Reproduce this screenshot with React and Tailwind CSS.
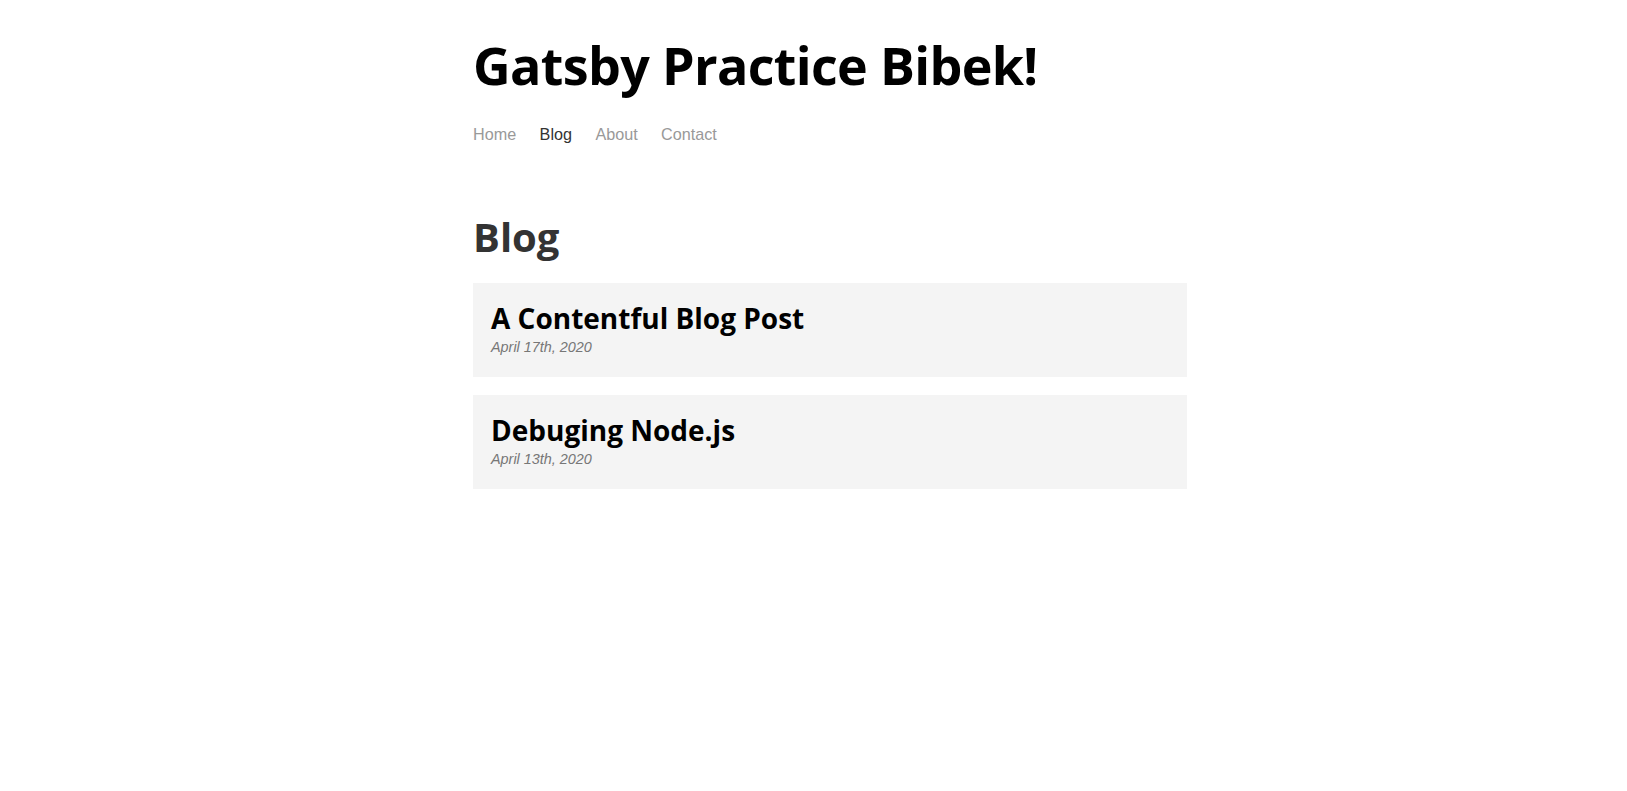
import React from "react";

const heading = { fontFamily: '"Open Sans", "Noto Sans", sans-serif' };
const body = { fontFamily: '"Liberation Sans", Arial, sans-serif' };

const posts = [
  { title: "A Contentful Blog Post", date: "April 17th, 2020" },
  { title: "Debuging Node.js", date: "April 13th, 2020" },
];

export default function App() {
  return (
    <div className="min-h-screen bg-white pl-[33px]">
      <div className="mx-auto w-[750px] px-[18px] pt-[33px]">
        <header className="pb-[67px]">
          <h1 className="text-[52px] leading-[64px] font-bold tracking-[-0.65px] text-black" style={heading}>
            Gatsby Practice Bibek!
          </h1>
          <ul className="mt-[25px] flex gap-[23.4px] text-[16.2px] leading-[24px]" style={body}>
            <li className="text-[#999]">Home</li>
            <li className="text-[#333]">Blog</li>
            <li className="text-[#999]">About</li>
            <li className="text-[#999]">Contact</li>
          </ul>
        </header>
        <main>
          <h1 className="text-[40px] leading-[48px] font-bold text-[#333]" style={heading}>
            Blog
          </h1>
          <ol className="mt-[22px] flex flex-col gap-[18px]">
            {posts.map((p) => (
              <li key={p.title} className="bg-[#f4f4f4] p-[18px]">
                <h2 className="text-[28px] leading-[34px] font-bold text-black" style={heading}>
                  {p.title}
                </h2>
                <p className="text-[14.4px] leading-[24px] italic text-[#777]" style={body}>
                  {p.date}
                </p>
              </li>
            ))}
          </ol>
        </main>
      </div>
    </div>
  );
}
